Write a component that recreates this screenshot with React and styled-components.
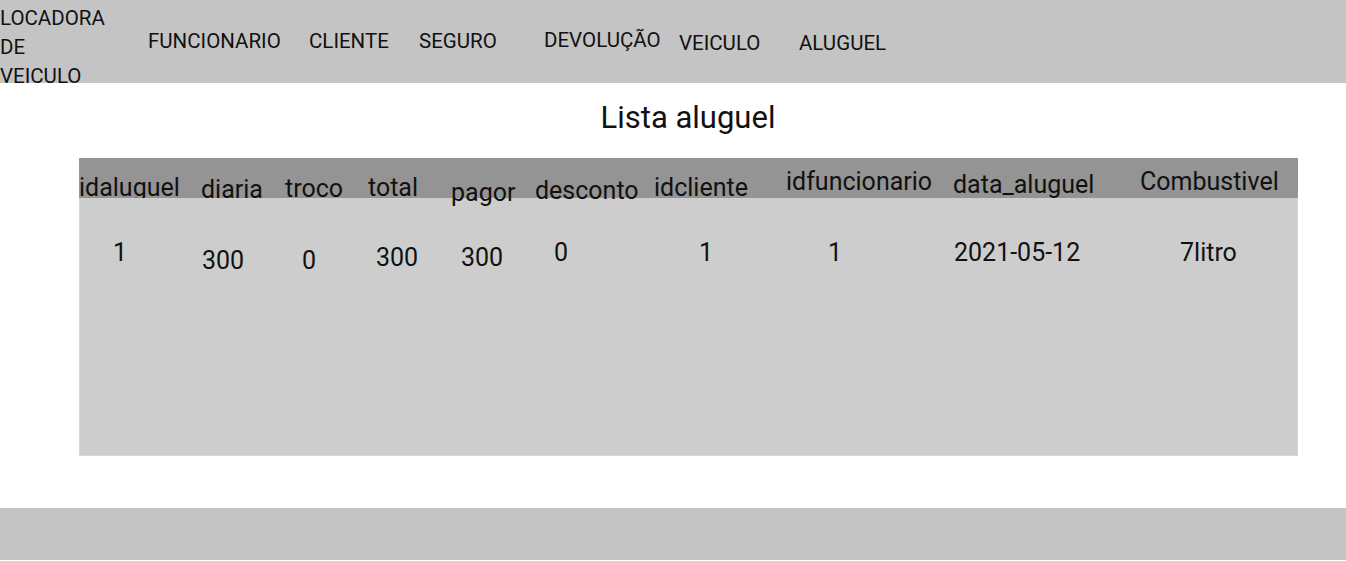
import React from "react";
import styled, { createGlobalStyle } from "styled-components";

const GlobalStyle = createGlobalStyle`
  body {
    margin: 0;
    font-family: Roboto, "Liberation Sans", sans-serif;
    color: #111;
    background: #fff;
  }
`;

const TopBar = styled.header`
  height: 83px;
  background: #c4c4c4;
  display: flex;
  align-items: flex-start;
`;

const Brand = styled.div`
  width: 148px;
  padding-top: 4px;
  font-size: 20.5px;
  line-height: 29px;
  flex-shrink: 0;
`;

const NavList = styled.nav`
  display: flex;
`;

const NavItem = styled.a`
  display: block;
  width: ${({ $w }) => $w}px;
  padding-top: ${({ $top }) => $top}px;
  font-size: 20.5px;
  line-height: 29px;
  color: #111;
  text-decoration: none;
`;

const Title = styled.h1`
  margin: 17px 0 0;
  padding-left: 30px;
  height: 58px;
  font-size: 31px;
  font-weight: 400;
  line-height: 36px;
  text-align: center;
`;

const Table = styled.section`
  margin-left: 79px;
  width: 1219px;
`;

const columns = "122px 84px 83px 83px 84px 119px 132px 167px 187px 1fr";

const HeadRow = styled.div`
  height: 40px;
  background: #949494;
  display: grid;
  grid-template-columns: ${columns};
`;

const HeadCell = styled.div`
  padding-top: ${({ $top }) => $top}px;
  height: ${({ $clip, $top }) => ($clip ? `${40 - $top}px` : "auto")};
  overflow: ${({ $clip }) => ($clip ? "hidden" : "visible")};
  font-size: 25px;
  line-height: 29px;
  white-space: nowrap;
`;

const Body = styled.div`
  height: 258px;
  box-sizing: border-box;
  background: #cdcdcd;
  border: 1px solid #d6d6d6;
  border-top: none;
  display: grid;
  grid-template-columns: ${columns};
  align-items: start;
`;

const Cell = styled.div`
  padding-top: ${({ $top }) => $top}px;
  padding-left: ${({ $left }) => $left}px;
  font-size: 25px;
  line-height: 29px;
  white-space: nowrap;
`;

const Footer = styled.footer`
  margin-top: 52px;
  height: 52px;
  background: #c4c4c4;
`;

const menu = [
  { label: "FUNCIONARIO", w: 161, top: 27 },
  { label: "CLIENTE", w: 110, top: 27 },
  { label: "SEGURO", w: 125, top: 27 },
  { label: "DEVOLUÇÃO", w: 135, top: 26 },
  { label: "VEICULO", w: 120, top: 29 },
  { label: "ALUGUEL", w: 120, top: 29 },
];

const heads = [
  { label: "idaluguel", top: 15, clip: true },
  { label: "diaria", top: 17 },
  { label: "troco", top: 16 },
  { label: "total", top: 15 },
  { label: "pagor", top: 20 },
  { label: "desconto", top: 18 },
  { label: "idcliente", top: 15 },
  { label: "idfuncionario", top: 9 },
  { label: "data_aluguel", top: 12 },
  { label: "Combustivel", top: 9 },
];

const row = [
  { value: "1", left: 33, top: 40 },
  { value: "300", left: 0, top: 48 },
  { value: "0", left: 16, top: 48 },
  { value: "300", left: 7, top: 45 },
  { value: "300", left: 9, top: 45 },
  { value: "0", left: 18, top: 40 },
  { value: "1", left: 44, top: 40 },
  { value: "1", left: 41, top: 40 },
  { value: "2021-05-12", left: 0, top: 40 },
  { value: "7litro", left: 39, top: 40 },
];

export default function App() {
  return (
    <>
      <GlobalStyle />
      <TopBar>
        <Brand>
          LOCADORA
          <br />
          DE
          <br />
          VEICULO
        </Brand>
        <NavList>
          {menu.map((item) => (
            <NavItem key={item.label} href="#" $w={item.w} $top={item.top}>
              {item.label}
            </NavItem>
          ))}
        </NavList>
      </TopBar>

      <Title>Lista aluguel</Title>

      <Table>
        <HeadRow>
          {heads.map((h) => (
            <HeadCell key={h.label} $top={h.top} $clip={h.clip}>
              {h.label}
            </HeadCell>
          ))}
        </HeadRow>
        <Body>
          {row.map((c, i) => (
            <Cell key={i} $left={c.left} $top={c.top}>
              {c.value}
            </Cell>
          ))}
        </Body>
      </Table>

      <Footer />
    </>
  );
}
